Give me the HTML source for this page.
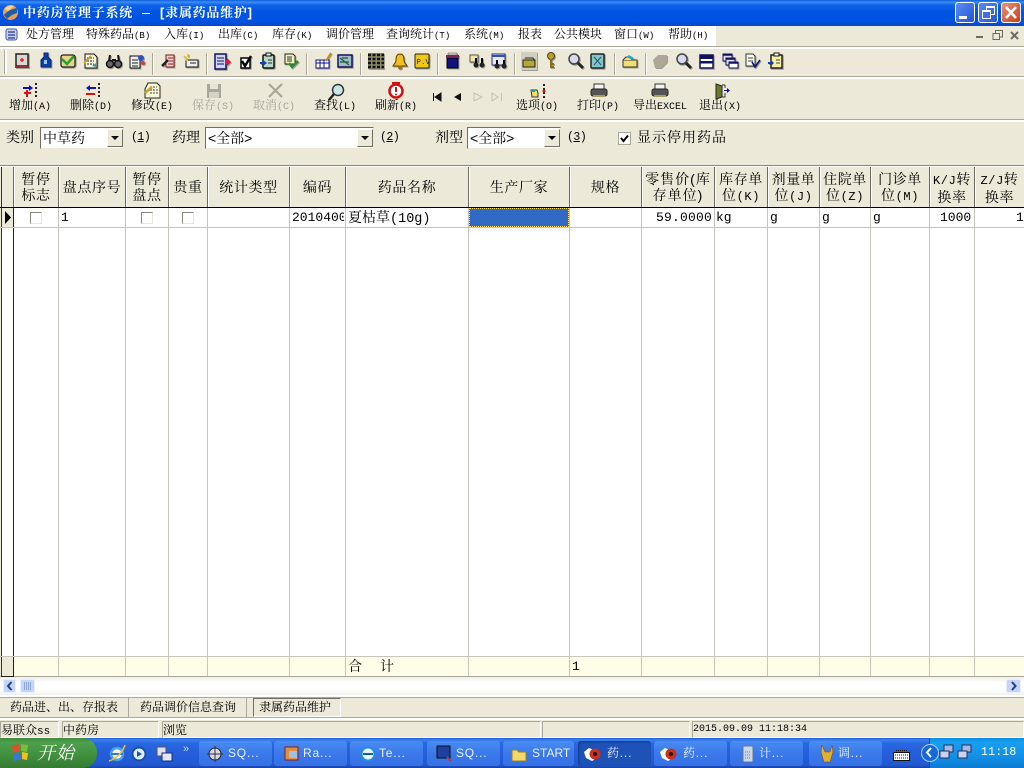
<!DOCTYPE html>
<html><head><meta charset="utf-8"><style>
html,body{margin:0;padding:0;width:1024px;height:768px;overflow:hidden;background:#ece9d8}
body{position:relative;font-family:"Liberation Sans","Noto Serif CJK SC",serif;font-size:12px;color:#000}
.a,.t,.l,svg{position:absolute}
.t{white-space:pre;line-height:16px}
.m{font-family:"Liberation Mono","Noto Serif CJK SC",monospace}
.c{text-align:center}
.h{font-size:14px;line-height:16px;text-align:center;position:absolute;white-space:pre;letter-spacing:.6px}
.b{font-size:12px;text-align:center;position:absolute;width:60px;top:98px;line-height:15px;white-space:pre}
.b i{font-style:normal;font-family:"Liberation Mono",monospace;font-size:10px}
.g{color:#a6a499}
.v{position:absolute;top:167px;width:1px;height:510px;background:#c8c6ba}
.vh{position:absolute;top:167px;width:2px;height:40px;background:#fff;border-left:1px solid #6c6b62;box-sizing:border-box}
.sep{position:absolute;top:53px;height:22px;border-left:1px solid #aca899;background:#fff;box-sizing:border-box;width:2px}
.combo{position:absolute;background:#fff;border:1px solid #716f64;border-right-color:#ece9d8;border-bottom-color:#ece9d8;box-sizing:border-box;height:22px;top:127px;font-size:14px;line-height:20px;padding-left:2px;white-space:pre}
.dd{position:absolute;right:0;top:1px;width:16px;height:18px;background:#ece9d8;border:1px solid;border-color:#fff #716f64 #716f64 #fff;box-sizing:border-box}
.dd:after{content:"";position:absolute;left:3px;top:6px;border:4px solid transparent;border-top:4px solid #000;border-bottom:0}
.cb{position:absolute;width:12px;height:12px;top:212px;border:1px solid #8a887c;border-right-color:#e8e6da;border-bottom-color:#e8e6da;box-sizing:border-box;background:#fff}
.tb{position:absolute;top:741px;height:25px;width:73px;background:linear-gradient(#4a8cf2,#3a79ea 50%,#3670e6);border-radius:3px;color:#e8f0ff;font-size:12px;line-height:25px;padding-left:29px;box-sizing:border-box;white-space:pre;letter-spacing:.8px}
.st{position:absolute;top:721px;height:17px;border:1px solid #aca899;border-right-color:#fff;border-bottom-color:#fff;box-sizing:border-box;line-height:16px;font-size:12px;white-space:pre}
.p{font-size:11.500px;font-family:"Liberation Mono",monospace}
</style></head><body>

<!-- title bar -->
<div class="a" style="left:0;top:0;width:1024px;height:26px;background:linear-gradient(#0a5ed8 0,#3c8cf5 2px,#0f63ea 5px,#0054e3 12px,#0152e0 22px,#0a47c0 26px)"></div>
<svg style="left:2px;top:4px" width="17" height="17" viewBox="0 0 17 17"><circle cx="8.500" cy="8.500" r="7.500" fill="#e8a050"/><path d="M2 11 C5 7 10 5 15 4 L15 9 C11 10 7 13 5 15Z" fill="#1d5ea8"/><path d="M3 5 C5 2 9 1 12 2 L6 7Z" fill="#f2d8a0"/></svg>
<div class="t" style="left:23px;top:5px;color:#fff;font-weight:bold;font-size:13px;line-height:16px;letter-spacing:.75px">中药房管理子系统</div>
<div class="a" style="left:142px;top:13px;width:8px;height:1px;background:#fff"></div>
<div class="t" style="left:160px;top:5px;color:#fff;font-weight:bold;font-size:13px;line-height:16px;letter-spacing:.75px">[隶属药品维护]</div>
<!-- caption buttons -->
<div class="a" style="left:955px;top:2px;width:20px;height:21px;border:1px solid #fff;border-radius:3px;background:linear-gradient(135deg,#5b8df0,#1f55d8);box-sizing:border-box"><div class="a" style="left:3px;top:13px;width:8px;height:3px;background:#fff"></div></div>
<div class="a" style="left:978px;top:2px;width:20px;height:21px;border:1px solid #fff;border-radius:3px;background:linear-gradient(135deg,#5b8df0,#1f55d8);box-sizing:border-box"><div class="a" style="left:7px;top:3px;width:7px;height:6px;border:1px solid #fff;border-top-width:2px"></div><div class="a" style="left:3px;top:7px;width:7px;height:6px;border:1px solid #fff;border-top-width:2px;background:#3f70e4"></div></div>
<div class="a" style="left:1001px;top:2px;width:20px;height:21px;border:1px solid #fff;border-radius:3px;background:linear-gradient(135deg,#e8927a,#c8401c);box-sizing:border-box"><svg style="left:3px;top:3px" width="12" height="13"><path d="M1 1 L11 12 M11 1 L1 12" stroke="#fff" stroke-width="2.500"/></svg></div>

<!-- menu bar -->
<div class="a" style="left:0;top:26px;width:716px;height:20px;background:#fff"></div>
<svg style="left:4px;top:27px" width="15" height="16" viewBox="0 0 15 16"><rect x="2" y="2" width="11" height="11" rx="2" fill="#c9d0ee" stroke="#4658a8"/><path d="M4 5h7M4 8h7M4 11h7" stroke="#223a98" stroke-width="1.200"/></svg>
<div class="t" style="left:26px;top:26px">处方管理</div>
<div class="t" style="left:86px;top:26px">特殊药品<span class="m" style="font-size:9px">(B)</span></div>
<div class="t" style="left:164px;top:26px">入库<span class="m" style="font-size:9px">(I)</span></div>
<div class="t" style="left:218px;top:26px">出库<span class="m" style="font-size:9px">(C)</span></div>
<div class="t" style="left:272px;top:26px">库存<span class="m" style="font-size:9px">(K)</span></div>
<div class="t" style="left:326px;top:26px">调价管理</div>
<div class="t" style="left:386px;top:26px">查询统计<span class="m" style="font-size:9px">(T)</span></div>
<div class="t" style="left:464px;top:26px">系统<span class="m" style="font-size:9px">(M)</span></div>
<div class="t" style="left:518px;top:26px">报表</div>
<div class="t" style="left:554px;top:26px">公共模块</div>
<div class="t" style="left:614px;top:26px">窗口<span class="m" style="font-size:9px">(W)</span></div>
<div class="t" style="left:668px;top:26px">帮助<span class="m" style="font-size:9px">(H)</span></div>
<div class="a" style="left:976px;top:36px;width:7px;height:2px;background:#6c6b62"></div>
<svg style="left:992px;top:30px" width="12" height="11"><path d="M3.500 3V.5H10.500V7H8M1 3.500H7.500V9.500H1Z" fill="none" stroke="#6c6b62"/></svg>
<svg style="left:1010px;top:31px" width="10" height="10"><path d="M1 1L8 8M8 1L1 8" stroke="#6c6b62" stroke-width="2"/></svg>

<!-- toolbar 1 -->
<div class="a" style="left:0;top:46px;width:1024px;height:2px;background:#fff;border-top:1px solid #aca899"></div>
<div class="a" style="left:0;top:76px;width:1024px;height:2px;border-top:1px solid #aca899;background:#fff"></div>
<div class="a" style="left:4px;top:50px;width:2px;height:24px;border-left:1px solid #aca899;background:#fff"></div>
<div class="sep" style="left:152px"></div><div class="sep" style="left:206px"></div><div class="sep" style="left:306px"></div><div class="sep" style="left:360px"></div><div class="sep" style="left:437px"></div><div class="sep" style="left:514px"></div><div class="sep" style="left:614px"></div><div class="sep" style="left:645px"></div>

<svg style="left:0;top:46px;filter:drop-shadow(1px 1px 0 #a09e90)" width="1024" height="32" viewBox="0 46 1024 32">
<!-- 1 med -->
<rect x="16" y="54" width="12" height="12" fill="#d8d8d0" stroke="#222" stroke-width="1.500"/><path d="M20 60h4M22 58v4" stroke="#e02030" stroke-width="1.500"/><path d="M15 67h14" stroke="#903030" stroke-width="2"/>
<!-- 2 bottle -->
<path d="M44 53h4v4l3 3v7h-10v-7l3-3z" fill="#0e3fa8" stroke="#0a2470"/><rect x="44" y="60" width="3" height="4" fill="#9cc0ef"/>
<!-- 3 mail check -->
<rect x="61" y="55" width="14" height="12" rx="2" fill="#e9d48c" stroke="#222" stroke-width="1.300"/><path d="M62 59l5 5 7-8" fill="none" stroke="#2aa030" stroke-width="2.500"/>
<!-- 4 doc -->
<path d="M85 54h9l3 3v11H85z" fill="#fbf8e0" stroke="#111"/><path d="M87 58h7M87 61h7M87 64h7" stroke="#222" stroke-dasharray="2 1"/><path d="M84 63l7-7" stroke="#c8a030" stroke-width="2"/><path d="M92 66l4-3v4z" fill="#30a0a0"/>
<!-- 5 binoc -->
<circle cx="110" cy="64" r="3.500" fill="#666" stroke="#111" stroke-width="1.500"/><circle cx="118" cy="64" r="3.500" fill="#666" stroke="#111" stroke-width="1.500"/><path d="M110 55l-1 6M118 55l1 6M112 60h4" stroke="#111" stroke-width="2"/>
<!-- 6 -->
<rect x="130" y="56" width="10" height="12" fill="#eee" stroke="#111"/><path d="M132 60h6M132 63h6M132 66h6" stroke="#222"/><circle cx="141" cy="58" r="3" fill="#3050c0"/><circle cx="143" cy="63" r="2" fill="#d04040"/>
<!-- 7 -->
<rect x="166" y="55" width="8" height="12" fill="#f0d0d0" stroke="#7a1818"/><path d="M162 66l6-6" stroke="#222" stroke-width="2.500"/><path d="M168 58h5M168 61h5M168 64h5" stroke="#902020"/>
<!-- 8 -->
<rect x="186" y="60" width="12" height="7" fill="#eee" stroke="#111"/><path d="M184 56l3 3M188 54v3M185 60h3" stroke="#d8c020" stroke-width="1.500"/><path d="M190 63h6" stroke="#222"/>
<!-- 9 clipboard -->
<rect x="215" y="54" width="11" height="15" fill="#cfd6f4" stroke="#101060" stroke-width="1.500"/><path d="M217 58h7M217 61h7M217 64h7" stroke="#101060"/><path d="M225 60h2v-2l4 4-4 4v-2h-2z" fill="#e01840"/>
<!-- 10 check -->
<rect x="241" y="58" width="9" height="10" fill="#fff" stroke="#000" stroke-width="1.500"/><path d="M242 61l3 5 6-10" fill="none" stroke="#000" stroke-width="2.500"/>
<!-- 11 clip -->
<rect x="263" y="55" width="11" height="13" rx="1" fill="#b8d8c8" stroke="#111" stroke-width="1.500"/><rect x="266" y="53" width="5" height="3" fill="#eee" stroke="#111"/><path d="M260 62h3v-2l4 3-4 3v-2h-3z" fill="#1040c0"/><path d="M268 60h4M268 63h4" stroke="#333"/>
<!-- 12 doc check -->
<path d="M285 54h8l2 2v8h-10z" fill="#f4f4c0" stroke="#222"/><path d="M287 57h5M287 59h5M287 61h5" stroke="#333"/><path d="M289 63l3 4 6-6" fill="none" stroke="#2a9030" stroke-width="2.500"/>
<!-- 13 -->
<rect x="316" y="60" width="13" height="8" fill="#fff" stroke="#101090"/><path d="M316 63h13M320 60v8M324 60v8" stroke="#101090"/><path d="M326 61l5-8" stroke="#c09020" stroke-width="2"/>
<!-- 14 -->
<rect x="338" y="55" width="14" height="12" fill="#a8b8c8" stroke="#101060" stroke-width="1.500"/><path d="M340 58l9 7M348 58h-6M340 62h9" stroke="#106040" stroke-width="1.200"/>
<!-- 15 grid -->
<rect x="368" y="53" width="16" height="16" fill="#8a8a6a"/>
<path d="M368 55h16M368 59h16M368 63h16M368 67h16" stroke="#111" stroke-width="2.500" stroke-dasharray="3 1.500"/>
<!-- 16 bell -->
<path d="M400 54c-3 0-4 3-4 6 0 3-2 4-3 6h14c-1-2-3-3-3-6 0-3-1-6-4-6z" fill="#f0c020" stroke="#604000"/><circle cx="400" cy="67.500" r="2" fill="#a07010"/>
<!-- 17 PV -->
<rect x="415" y="54" width="14" height="14" rx="1" fill="#f0c818" stroke="#222"/><text x="416.500" y="64" font-family="Liberation Mono" font-size="7.500" fill="#222">P.V</text>
<!-- 18 jar -->
<rect x="447" y="58" width="11" height="10" fill="#101080" stroke="#000"/><path d="M446 55h13v3h-13z" fill="#802050"/><path d="M448 53h9v2h-9z" fill="#d8d8d8" stroke="#444" stroke-width=".5"/>
<!-- 19 -->
<path d="M470 55h8v7h-8z" fill="#f0e8a0" stroke="#555"/><circle cx="476" cy="65" r="2.500" fill="#222"/><circle cx="482" cy="65" r="2.500" fill="#222"/><path d="M476 58v5M482 58v5" stroke="#000" stroke-width="2"/>
<!-- 20 -->
<rect x="492" y="54" width="13" height="11" fill="#e8e8f8" stroke="#203080"/><path d="M492 56h13" stroke="#3050c0" stroke-width="2"/><circle cx="497" cy="66" r="2.500" fill="#222"/><circle cx="504" cy="66" r="2.500" fill="#222"/><path d="M497 60v4M504 60v4" stroke="#000" stroke-width="2"/>
<!-- 21 -->
<rect x="521" y="52" width="16" height="18" fill="#d0cebe"/><path d="M523 60h12v7h-12z" fill="#b8a830" stroke="#222"/><path d="M525 58h8l2 3" fill="none" stroke="#222"/>
<!-- 22 key -->
<circle cx="551" cy="56" r="3.500" fill="#c0a020" stroke="#443"/><path d="M551 59v9M551 64h3M551 67h3" stroke="#8a7010" stroke-width="2"/>
<!-- 23 mag -->
<circle cx="574" cy="59" r="5" fill="#d8d8f0" stroke="#444" stroke-width="1.500"/><path d="M578 63l5 5" stroke="#222" stroke-width="3"/>
<!-- 24 -->
<rect x="591" y="54" width="13" height="14" rx="1" fill="#80c8c8" stroke="#222" stroke-width="1.500"/><path d="M594 57l7 8M601 57l-7 8" stroke="#305070"/>
<!-- 25 -->
<path d="M623 60h14v7h-14z" fill="#f0e070" stroke="#333"/><path d="M623 60l3-3h4l2 3" fill="#f0e070" stroke="#333"/><path d="M628 56l5 3" stroke="#20a0d0" stroke-width="2.500"/>
<!-- 26 grey -->
<path d="M653 60l5-5h9v7l-6 6h-6z" fill="#aca899"/>
<!-- 27 mag -->
<circle cx="682" cy="59" r="5" fill="#d8d8f0" stroke="#444" stroke-width="1.500"/><path d="M686 63l5 5" stroke="#222" stroke-width="3"/>
<!-- 28 -->
<rect x="700" y="55" width="13" height="13" fill="#fff" stroke="#101060" stroke-width="1.500"/><rect x="700" y="55" width="13" height="4" fill="#101060"/><rect x="700" y="61" width="13" height="2.500" fill="#101060"/>
<!-- 29 -->
<rect x="723" y="54" width="9" height="7" fill="#dde" stroke="#101060"/><rect x="726" y="58" width="9" height="7" fill="#dde" stroke="#101060"/><rect x="729" y="62" width="9" height="6" fill="#fff" stroke="#101060"/><path d="M723 55h9M726 59h9M729 63h9" stroke="#101060" stroke-width="1.500"/>
<!-- 30 -->
<path d="M746 54h7l2 2v10h-9z" fill="#f8f8f0" stroke="#333"/><path d="M748 58h5M748 61h5" stroke="#444"/><path d="M752 62l3 5 5-7" fill="none" stroke="#101080" stroke-width="1.600"/>
<!-- 31 -->
<rect x="771" y="55" width="11" height="13" fill="#f8f0a0" stroke="#222" stroke-width="1.500"/><rect x="774" y="53" width="5" height="3" fill="#fff" stroke="#111"/><path d="M768 62h3v-2l3 3-3 3v-2h-3z" fill="#1040c0"/><path d="M776 60h4M776 63h4" stroke="#444"/>
</svg>

<!-- toolbar 2 -->
<div class="a" style="left:0;top:119px;width:1024px;height:2px;border-top:1px solid #aca899;background:#fff"></div>
<svg style="left:0;top:78px" width="800" height="24" viewBox="0 78 800 24">
<path d="M23 88h8" stroke="#1010c0" stroke-width="2"/><path d="M29 85l4 3-4 3z" fill="#1010c0"/><path d="M24 93h7M27 90v7" stroke="#e01010" stroke-width="2"/><path d="M36 83v16" stroke="#222" stroke-width="2" stroke-dasharray="2 2"/>
<path d="M88 88h8" stroke="#1010c0" stroke-width="2"/><path d="M90 85l-4 3 4 3z" fill="#1010c0"/><path d="M86 94h9" stroke="#e01010" stroke-width="2"/><path d="M99 83v16" stroke="#222" stroke-width="2" stroke-dasharray="2 2"/>
<path d="M148 83h9l3 3v12h-15v-9z" fill="#fbf8d8" stroke="#222"/><path d="M150 87h7M150 90h8M150 93h8" stroke="#444" stroke-dasharray="2 1"/><path d="M145 93l7-6" stroke="#c8a030" stroke-width="2.500"/>
<rect x="207" y="84" width="14" height="14" fill="#a9a798"/><rect x="210" y="84" width="8" height="5" fill="#e8e6da"/><rect x="209" y="92" width="10" height="6" fill="#d4d2c4"/>
<path d="M269 84l13 13M282 84l-13 13" stroke="#a9a798" stroke-width="2.200"/>
<circle cx="338" cy="90" r="5.500" fill="#c8e8e0" stroke="#334" stroke-width="1.500"/><path d="M334 94l-5 6" stroke="#222" stroke-width="2.500"/>
<circle cx="396" cy="91" r="6.500" fill="#fff" stroke="#d01010" stroke-width="2.500"/><path d="M396 87v5" stroke="#d01010" stroke-width="2"/><circle cx="396" cy="94.500" r="1" fill="#d01010"/><path d="M392 83h8" stroke="#d01010" stroke-width="2"/>
<path d="M433.500 93v8M441 93l-6 4 6 4z" stroke="#111" fill="#111"/>
<path d="M461 93l-7 4 7 4z" fill="#111"/>
<path d="M474 93l8 4-8 4z" fill="none" stroke="#c4c2b4"/>
<path d="M492 93l6 4-6 4zM501.500 93v8" fill="none" stroke="#c4c2b4"/>
<path d="M531 90h6l1 3v4h-6z" fill="#f0e060" stroke="#333"/><path d="M531 91h4" stroke="#20a0a0" stroke-width="2"/><path d="M544 84v15" stroke="#222" stroke-width="2" stroke-dasharray="2 2"/><circle cx="544" cy="91" r="1.500" fill="#e01010"/>
<path d="M594 84h10v5h-10z" fill="#f4f4f4" stroke="#333"/><rect x="591" y="89" width="16" height="7" rx="2" fill="#555" stroke="#222"/><path d="M593 96h12" stroke="#a8a060" stroke-width="2"/>
<path d="M655 84h10v5h-10z" fill="#f4f4f4" stroke="#333"/><rect x="652" y="89" width="16" height="7" rx="2" fill="#555" stroke="#222"/><path d="M654 96h12" stroke="#a8a060" stroke-width="2"/>
<path d="M716 84l6 2v11l-6 2z" fill="#6a7a20" stroke="#223"/><path d="M722 85h3M725 85v3M725 93v4h-3" stroke="#333" fill="none"/><path d="M724 90h3v-2l3 2.500-3 2.500v-2h-3z" fill="#1010a0"/>
</svg>
<div class="b" style="left:0">增加<i>(A)</i></div>
<div class="b" style="left:61px">删除<i>(D)</i></div>
<div class="b" style="left:122px">修改<i>(E)</i></div>
<div class="b g" style="left:183px">保存<i>(S)</i></div>
<div class="b g" style="left:244px">取消<i>(C)</i></div>
<div class="b" style="left:305px">查找<i>(L)</i></div>
<div class="b" style="left:366px">刷新<i>(R)</i></div>
<div class="b" style="left:507px">选项<i>(O)</i></div>
<div class="b" style="left:568px">打印<i>(P)</i></div>
<div class="b" style="left:630px">导出<i style="font-size:10px">EXCEL</i></div>
<div class="b" style="left:690px">退出<i>(X)</i></div>

<!-- filter row -->
<div class="t" style="left:6px;top:129px;font-size:14px">类别</div>
<div class="combo" style="left:40px;width:84px">中草药<div class="dd"></div></div>
<div class="t p" style="left:131px;top:130px;letter-spacing:-.5px">(<u>1</u>)</div>
<div class="t" style="left:172px;top:129px;font-size:14px">药理</div>
<div class="combo" style="left:205px;width:169px">&lt;全部&gt;<div class="dd"></div></div>
<div class="t p" style="left:380px;top:130px;letter-spacing:-.5px">(<u>2</u>)</div>
<div class="t" style="left:435px;top:129px;font-size:14px">剂型</div>
<div class="combo" style="left:467px;width:94px">&lt;全部&gt;<div class="dd"></div></div>
<div class="t p" style="left:567px;top:130px;letter-spacing:-.5px">(<u>3</u>)</div>
<div class="a" style="left:618px;top:132px;width:13px;height:13px;background:#fff;border:1px solid #a8a69a;box-sizing:border-box"></div>
<svg style="left:619px;top:133px" width="11" height="11"><path d="M2 5l2.500 3L9 2.500" fill="none" stroke="#000" stroke-width="2"/></svg>
<div class="t" style="left:637px;top:129px;font-size:14px;letter-spacing:1px">显示停用药品</div>

<!-- grid -->
<div class="a" style="left:0;top:165px;width:1024px;height:2px;background:#fff;border-top:1px solid #8a887c;box-sizing:border-box"></div>
<div class="a" style="left:0;top:167px;width:1024px;height:40px;background:#ece9d8"></div>
<div class="a" style="left:0;top:207px;width:1024px;height:450px;background:#fff"></div>
<div class="a" style="left:0;top:657px;width:1024px;height:20px;background:#fefde8"></div>
<div class="a" style="left:0;top:167px;width:1px;height:510px;background:#ece9d8"></div>
<div class="a" style="left:1px;top:167px;width:1px;height:510px;background:#333"></div>
<div class="a" style="left:2px;top:167px;width:11px;height:40px;background:#ece9d8"></div>
<div class="a" style="left:2px;top:207px;width:11px;height:450px;background:#fff"></div>
<div class="a" style="left:2px;top:208px;width:11px;height:19px;background:#ece9d8"></div>
<div class="a" style="left:2px;top:657px;width:11px;height:19px;background:#ece9d8"></div>
<div class="v" style="left:58px"></div><div class="v" style="left:125px"></div><div class="v" style="left:168px"></div><div class="v" style="left:207px"></div><div class="v" style="left:289px"></div><div class="v" style="left:345px"></div><div class="v" style="left:468px"></div><div class="v" style="left:569px"></div><div class="v" style="left:641px"></div><div class="v" style="left:714px"></div><div class="v" style="left:767px"></div><div class="v" style="left:819px"></div><div class="v" style="left:870px"></div><div class="v" style="left:929px"></div><div class="v" style="left:974px"></div>
<div class="a" style="left:13px;top:167px;width:1px;height:510px;background:#222"></div>
<div class="a" style="left:0;top:227px;width:1024px;height:1px;background:#c8c6ba"></div>
<div class="a" style="left:0;top:656px;width:1024px;height:1px;background:#c8c6ba"></div>
<div class="a" style="left:0;top:676px;width:1024px;height:1px;background:#a8a69a"></div>
<div class="a" style="left:0;top:207px;width:1024px;height:1px;background:#000"></div>
<div class="a" style="left:1px;top:676px;width:13px;height:1px;background:#222"></div>
<div class="vh" style="left:13px"></div><div class="vh" style="left:58px"></div><div class="vh" style="left:125px"></div><div class="vh" style="left:168px"></div><div class="vh" style="left:207px"></div><div class="vh" style="left:289px"></div><div class="vh" style="left:345px"></div><div class="vh" style="left:468px"></div><div class="vh" style="left:569px"></div><div class="vh" style="left:641px"></div><div class="vh" style="left:714px"></div><div class="vh" style="left:767px"></div><div class="vh" style="left:819px"></div><div class="vh" style="left:870px"></div><div class="vh" style="left:929px"></div><div class="vh" style="left:974px"></div>

<div class="h" style="left:14px;width:44px;top:171px">暂停
标志</div>
<div class="h" style="left:59px;width:66px;top:179px">盘点序号</div>
<div class="h" style="left:126px;width:42px;top:171px">暂停
盘点</div>
<div class="h" style="left:169px;width:38px;top:179px">贵重</div>
<div class="h" style="left:208px;width:81px;top:179px">统计类型</div>
<div class="h" style="left:290px;width:55px;top:179px">编码</div>
<div class="h" style="left:346px;width:122px;top:179px">药品名称</div>
<div class="h" style="left:469px;width:100px;top:179px">生产厂家</div>
<div class="h" style="left:570px;width:71px;top:179px">规格</div>
<div class="h" style="left:642px;width:72px;top:171px;letter-spacing:1px">零售价(库
存单位)</div>
<div class="h" style="left:715px;width:52px;top:171px">库存单
位<span class="m" style="font-size:12px">(K)</span></div>
<div class="h" style="left:768px;width:51px;top:171px">剂量单
位<span class="m" style="font-size:12px">(J)</span></div>
<div class="h" style="left:820px;width:50px;top:171px">住院单
位<span class="m" style="font-size:12px">(Z)</span></div>
<div class="h" style="left:871px;width:58px;top:171px">门诊单
位<span class="m" style="font-size:12px">(M)</span></div>
<div class="h" style="left:930px;width:44px;top:171px"><span class="m" style="font-size:12px">K/J</span>转
换率</div>
<div class="h" style="left:975px;width:49px;top:171px"><span class="m" style="font-size:12px">Z/J</span>转
换率</div>

<!-- row 1 -->
<svg style="left:4px;top:211px" width="8" height="13"><path d="M1 0L7 6.500L1 13Z" fill="#000"/></svg>
<div class="cb" style="left:30px"></div><div class="cb" style="left:141px"></div><div class="cb" style="left:182px"></div>
<div class="t m" style="left:61px;top:210px;font-size:13px">1</div>
<div class="a m" style="left:292px;top:210px;width:52px;overflow:hidden;font-size:13px;line-height:16px;white-space:pre">2010400</div>
<div class="t" style="left:348px;top:209px;font-size:14px">夏枯草<span class="m" style="font-size:13.500px">(10g)</span></div>
<div class="a" style="left:469px;top:208px;width:100px;height:19px;background:#316ac5;outline:1px dotted #ffe070;outline-offset:-1px"></div>
<div class="t m" style="left:656px;top:210px;font-size:13px;letter-spacing:.2px">59.0000</div>
<div class="t m" style="left:716px;top:210px;font-size:13px">kg</div>
<div class="t m" style="left:770px;top:210px;font-size:13px">g</div>
<div class="t m" style="left:822px;top:210px;font-size:13px">g</div>
<div class="t m" style="left:873px;top:210px;font-size:13px">g</div>
<div class="t m" style="left:940px;top:210px;font-size:13px">1000</div>
<div class="t m" style="left:1016px;top:210px;font-size:13px">1</div>
<!-- totals -->
<div class="t" style="left:348px;top:658px;font-size:14px">合</div>
<div class="t" style="left:380px;top:658px;font-size:14px">计</div>
<div class="t m" style="left:572px;top:659px;font-size:13px">1</div>

<!-- scrollbar -->
<div class="a" style="left:0;top:677px;width:1024px;height:18px;background:linear-gradient(#f0efe8,#fff 30%,#fff 70%,#f2f1ea)"></div>
<div class="a" style="left:3px;top:679px;width:13px;height:14px;background:#c6d5f6;border:1px solid #e6eeff;box-sizing:border-box;border-radius:2px"></div>
<svg style="left:6px;top:681px" width="8" height="10"><path d="M5.500 1L2 5l3.500 4" fill="none" stroke="#20408c" stroke-width="2"/></svg>
<div class="a" style="left:20px;top:679px;width:15px;height:14px;background:#c6d5f6;border:1px solid #e6eeff;box-sizing:border-box;border-radius:2px"></div>
<svg style="left:23px;top:682px" width="10" height="8"><path d="M1.500 0v8M3.500 0v8M5.500 0v8M7.500 0v8" stroke="#8fa8dc"/></svg>
<div class="a" style="left:1006px;top:679px;width:15px;height:14px;background:#c6d5f6;border:1px solid #e6eeff;box-sizing:border-box;border-radius:2px"></div>
<svg style="left:1010px;top:681px" width="8" height="10"><path d="M2 1L5.500 5 2 9" fill="none" stroke="#20408c" stroke-width="2"/></svg>

<!-- tabs -->
<div class="a" style="left:0;top:695px;width:1024px;height:2px;background:#fff"></div>
<div class="a" style="left:0;top:697px;width:1024px;height:21px;background:#ece9d8;border-top:1px solid #aca899;border-bottom:1px solid #aca899;box-sizing:border-box"></div>
<div class="a" style="left:128px;top:698px;width:1px;height:19px;background:#aca899"></div>
<div class="a" style="left:246px;top:698px;width:1px;height:19px;background:#aca899"></div>
<div class="a" style="left:253px;top:698px;width:88px;height:19px;background:#ece9d8;border:1px solid;border-color:#716f64 #fff #fff #716f64;box-sizing:border-box"></div>
<div class="t" style="left:10px;top:699px">药品进、出、存报表</div>
<div class="t" style="left:140px;top:699px">药品调价信息查询</div>
<div class="t" style="left:259px;top:699px">隶属药品维护</div>

<!-- status -->
<div class="a" style="left:0;top:718px;width:1024px;height:3px;background:#fff"></div>
<div class="a" style="left:0;top:720px;width:1024px;height:18px;background:#ece9d8"></div>
<div class="st" style="left:0;width:59px">易联众<span class="m" style="font-size:11px">ss</span></div>
<div class="st" style="left:62px;width:97px">中药房</div>
<div class="st" style="left:162px;width:379px">浏览</div>
<div class="st" style="left:542px;width:148px"></div>
<div class="st" style="left:692px;width:332px;font-size:10px;font-family:'Liberation Mono',monospace">2015.09.09 11:18:34</div>

<!-- taskbar -->
<div class="a" style="left:0;top:738px;width:1024px;height:30px;background:linear-gradient(#1d5ed8 0,#3a82ee 2px,#2a68e0 5px,#245edb 50%,#2259d0 90%,#1941a5)"></div>
<div class="a" style="left:0;top:738px;width:97px;height:30px;background:linear-gradient(#3c8c3c,#4fa04c 15%,#3f8f3c 60%,#347a34);border-radius:0 14px 14px 0"></div>
<svg style="left:10px;top:742px" width="20" height="20"><path d="M2 4l7-2 1 7-7 2z" fill="#e0502a"/><path d="M11 2l7 1-1 7-6-1z" fill="#7cbc3c"/><path d="M3 12l7-2 1 7-7 2z" fill="#3a78d8"/><path d="M12 10l6 1-1 7-5-1z" fill="#f4c020"/></svg>
<div class="t" style="left:37px;top:743px;color:#fff;font-style:italic;font-size:18px;line-height:20px;letter-spacing:1px">开始</div>
<svg style="left:108px;top:744px" width="80" height="20">
<circle cx="9" cy="10" r="6" fill="#f4f8ff" stroke="#4aa0e8" stroke-width="2.500"/><path d="M3 10h12" stroke="#2a80d8" stroke-width="2"/><path d="M1 17C8 15 15 8 17 1" fill="none" stroke="#f0c030" stroke-width="1.500"/>
<circle cx="31" cy="10" r="6.500" fill="#ddeeff" stroke="#1a50a8" stroke-width="2"/><path d="M29 7l5 3-5 3z" fill="#2050b0"/>
<rect x="49" y="3" width="9" height="9" fill="#e0e0e8" stroke="#556"/><rect x="54" y="9" width="10" height="8" fill="#dfe8ff" stroke="#1a2a80"/>
</svg>
<div class="t" style="left:183px;top:741px;color:#c0d8ff;font-size:11px">»</div>
<div class="tb" style="left:199px">SQ...</div>
<div class="tb" style="left:274px">Ra...</div>
<div class="tb" style="left:350px">Te...</div>
<div class="tb" style="left:427px">SQ...</div>
<div class="tb" style="left:503px;width:71px;letter-spacing:0">START</div>
<div class="tb" style="left:578px;background:#1e52b7;box-shadow:inset 1px 1px 2px #123a88">药...</div>
<div class="tb" style="left:654px">药...</div>
<div class="tb" style="left:730px">计...</div>
<div class="tb" style="left:809px">调...</div>
<svg style="left:199px;top:744px" width="690" height="20">
<circle cx="16" cy="10" r="6" fill="#d8d8e8" stroke="#223"/><path d="M16 2v16M8 10h16" stroke="#333"/>
<rect x="86" y="3" width="13" height="13" fill="#e09040" stroke="#802010"/><rect x="90" y="7" width="8" height="7" fill="#a0c0e0"/>
<circle cx="169" cy="10" r="6.500" fill="#e8f4ff" stroke="#2090d8" stroke-width="2"/><path d="M164 10h10" stroke="#1060b0" stroke-width="2"/>
<rect x="238" y="2" width="13" height="12" fill="#2040a0" stroke="#111"/><path d="M248 13l4 4" stroke="#c03040" stroke-width="2"/>
<path d="M313 6h5l2 2h7v9h-14z" fill="#f4d868" stroke="#908030"/>
<path d="M390 4l7 3 3 6-7 4-6-3-2-6z" fill="#fff"/><circle cx="396" cy="10" r="5.500" fill="#c83020"/><circle cx="396" cy="10" r="2" fill="#301010"/>
<path d="M466 4l7 3 3 6-7 4-6-3-2-6z" fill="#fff"/><circle cx="472" cy="10" r="5.500" fill="#c83020"/><circle cx="472" cy="10" r="2" fill="#301010"/>
<rect x="544" y="2" width="10" height="16" rx="1" fill="#c8d8e8" stroke="#607898"/><path d="M546 8h6M546 11h6M546 14h6" stroke="#6080a0" stroke-dasharray="1 1"/>
<path d="M623 1l3 7h5l2-7 1 7-3 10h-6l-3-10z" fill="#e0b030" stroke="#804010" stroke-width=".5"/>
</svg>

<!-- keyboard icon -->
<svg style="left:893px;top:748px" width="18" height="14"><rect x=".5" y="4.500" width="16" height="8" fill="#fff" stroke="#111"/><path d="M2 7h13M2 10h13" stroke="#111" stroke-dasharray="1 1"/><path d="M3 2.500h11" stroke="#111" stroke-dasharray="1 1"/></svg>
<!-- tray -->
<div class="a" style="left:929px;top:738px;width:95px;height:30px;background:linear-gradient(#0c8ce0,#18a0f0 15%,#1290e8 60%,#0d7ad0);border-left:1px solid #0a4aa0;box-sizing:border-box"></div>
<div class="a" style="left:921px;top:744px;width:16px;height:16px;border-radius:50%;background:#1868d8;border:1px solid #a8d0f8"></div>
<svg style="left:925px;top:747px" width="8" height="11"><path d="M6 1L2 5.500 6 10" fill="none" stroke="#fff" stroke-width="2"/></svg>
<svg style="left:939px;top:744px" width="40" height="18"><rect x="5" y="1" width="9" height="7" fill="#a8b8e0" stroke="#223060"/><rect x="1" y="7" width="9" height="7" fill="#c8d4f0" stroke="#223060"/>
<rect x="23" y="1" width="9" height="7" fill="#a8b8e0" stroke="#223060"/><rect x="19" y="7" width="9" height="7" fill="#c8d4f0" stroke="#223060"/></svg>
<div class="t m" style="left:981px;top:745px;color:#fff;font-size:11.500px;letter-spacing:.2px">11:18</div>
</body></html>
